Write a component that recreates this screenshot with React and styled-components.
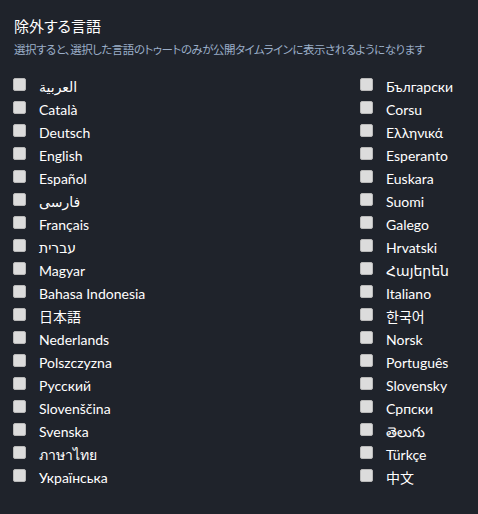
import React from "react";
import styled, { createGlobalStyle } from "styled-components";

const GlobalStyle = createGlobalStyle`
  html, body {
    margin: 0;
    background: #1f232b;
  }
  body {
    font-family: "Segoe UI", Lato, "Noto Sans", "DejaVu Sans", "Noto Sans CJK JP", sans-serif;
  }
`;

const Container = styled.div`
  width: 478px;
  min-height: 514px;
  box-sizing: border-box;
  padding: 15px 14px 20px 13px;
  background: #1f232b;
  color: #ffffff;
`;

const Title = styled.h3`
  margin: 0 0 0 1px;
  font-size: 15px;
  line-height: 22px;
  font-weight: 400;
  color: #ffffff;
  font-family: "Noto Sans CJK JP", sans-serif;
  font-feature-settings: "palt";
`;

const Hint = styled.p`
  margin: 3px 0 0 1px;
  font-size: 11.5px;
  line-height: 18px;
  color: #9baec8;
  font-family: "Noto Sans CJK JP", sans-serif;
  font-feature-settings: "palt";
  letter-spacing: -0.5px;
  white-space: nowrap;
`;

const Grid = styled.div`
  display: grid;
  grid-template-columns: 347px auto;
  grid-auto-flow: column;
  grid-template-rows: repeat(18, 23px);
  margin-top: 18px;
`;

const Row = styled.label`
  display: flex;
  align-items: center;
  gap: 13px;
  font-size: 14px;
  color: #ffffff;
  cursor: pointer;
  position: relative;
  top: -1px;
`;

const Box = styled.input`
  appearance: none;
  margin: 0;
  width: 13px;
  height: 13px;
  flex: none;
  box-sizing: border-box;
  background: #dcdcdc;
  border: 1px solid #b9b9b9;
  border-radius: 2px;
  position: relative;
  top: -2px;
`;

const Name = styled.span`
  line-height: 23px;
`;

const languages = [
  "العربية",
  "Català",
  "Deutsch",
  "English",
  "Español",
  "فارسی",
  "Français",
  "עברית",
  "Magyar",
  "Bahasa Indonesia",
  "日本語",
  "Nederlands",
  "Polszczyzna",
  "Русский",
  "Slovenščina",
  "Svenska",
  "ภาษาไทย",
  "Українська",
  "Български",
  "Corsu",
  "Ελληνικά",
  "Esperanto",
  "Euskara",
  "Suomi",
  "Galego",
  "Hrvatski",
  "Հայերեն",
  "Italiano",
  "한국어",
  "Norsk",
  "Português",
  "Slovensky",
  "Српски",
  "తెలుగు",
  "Türkçe",
  "中文",
];

const App = () => {
  return (
    <Container>
      <GlobalStyle />
      <Title>除外する言語</Title>
      <Hint>選択すると、選択した言語のトゥートのみが公開タイムラインに表示されるようになります</Hint>
      <Grid>
        {languages.map((lang) => (
          <Row key={lang}>
            <Box type="checkbox" />
            <Name>{lang}</Name>
          </Row>
        ))}
      </Grid>
    </Container>
  );
};

export default App;
